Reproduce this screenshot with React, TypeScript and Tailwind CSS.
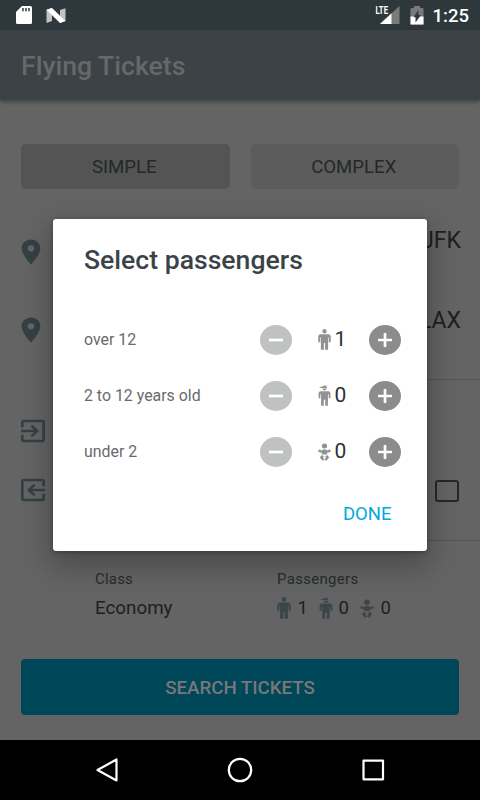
import type { ReactNode } from 'react';
import { MdExitToApp, MdPlace } from 'react-icons/md';

type PassengerKind = 'adult' | 'child' | 'infant';

interface PassengerRow {
  kind: PassengerKind;
  label: string;
  count: number;
}

const passengers: PassengerRow[] = [
  { kind: 'adult', label: 'over 12', count: 1 },
  { kind: 'child', label: '2 to 12 years old', count: 0 },
  { kind: 'infant', label: 'under 2', count: 0 },
];

function PassengerIcon({ kind, className }: { kind: PassengerKind; className?: string }) {
  if (kind === 'infant') {
    return (
      <svg viewBox="0 0 14 21" preserveAspectRatio="none" className={className} fill="currentColor">
        <ellipse cx="7" cy="4.9" rx="2.8" ry="2.5" />
        <path d="M.2 9.7 1.2 8.6 4.4 9.6 5.3 8.4H8.7L9.6 9.6 12.8 8.6 13.8 9.7 13.3 11 9.8 11.8V13.4H4.2V11.8L.7 11Z" />
        <path d="M3.6 14.3 6.3 15 5.4 16.7 6.6 18V19.2L4.9 19.5 2 16.8ZM10.4 14.3 7.7 15 8.6 16.7 7.4 18V19.2L9.1 19.5 12 16.8Z" />
      </svg>
    );
  }

  return (
    <svg viewBox="0 0 14 21" preserveAspectRatio="none" className={className} fill="currentColor">
      {kind === 'adult' ? (
        <circle cx="7" cy="2.3" r="2.2" />
      ) : (
        <path d="M2 2.9V2.1L5 1.5 6.4.6H8Q9.5 1 9.6 2.9ZM4.6 3.5H9.5Q9.2 5.3 7.1 5.4 5 5.3 4.6 3.5Z" />
      )}
      {kind === 'adult' ? (
        <path d="M2.5 5.2H11.5Q13.7 5.4 13.7 7.6V13.2H11.6V8.4H10.9V20.8H7.6V14H6.4V20.8H3.1V8.4H2.4V13.2H.3V7.6Q.3 5.4 2.5 5.2Z" />
      ) : (
        <path d="M3 6.2H11Q13.4 6.3 13.4 8.5V13.2H11.5V9.3H10.7V20.8H7.8V14.7H6.2V20.8H3.3V9.3H2.5V13.2H.6V8.5Q.6 6.3 3 6.2Z" />
      )}
    </svg>
  );
}

function RoundButton({ label, className, children }: { label: string; className: string; children: ReactNode }) {
  return (
    <button aria-label={label} className={`flex h-[30px] w-8 items-center justify-center rounded-[50%] ${className}`}>
      <svg viewBox="0 0 14 14" className="h-3.5 w-3.5" stroke="white" strokeWidth="2.7">
        {children}
      </svg>
    </button>
  );
}

function StatusBar() {
  return (
    <div className="flex h-[30px] items-center justify-between bg-[#2e383c] pr-[11px] pl-4">
      <div className="flex items-center gap-3.5">
        <svg viewBox="0 0 16 18" className="h-[18px] w-4">
          <path d="M6 0H14.5Q16 0 16 1.5V16.5Q16 18 14.5 18H1.5Q0 18 0 16.5V6Z" fill="white" />
          <path d="M6.2 2H7.7V5.2H6.2ZM9.2 2H10.7V5.2H9.2ZM12.2 2H13.7V5.2H12.2Z" fill="#2e383c" />
        </svg>
        <svg viewBox="0 0 20 15" className="h-[15px] w-5">
          <path d="M.5 1.8 6 0V13L.5 15ZM14 2 19.5.2V13L14 15Z" fill="#bfc3c4" />
          <path d="M.5 1.8 6 0 19.5 13 14 15Z" fill="white" />
        </svg>
      </div>
      <div className="flex items-center">
        <svg viewBox="0 0 25 20" className="mr-2.5 h-5 w-[25px]">
          <path d="M24.5 1V19H5Z" fill="#7a7a7a" />
          <path d="M16.5 8.2V19H5Z" fill="white" />
          <text x="0.5" y="9" fontSize="10.5" fontWeight="700" textLength="12.5" lengthAdjust="spacingAndGlyphs" fill="white" stroke="#2e383c" strokeWidth="1" paintOrder="stroke">
            LTE
          </text>
        </svg>
        <svg viewBox="0 0 14 19" className="mr-[9px] h-[19px] w-3.5">
          <path d="M4 0H10V2H12.5Q13.5 2 13.5 3V18.5H.5V3Q.5 2 1.5 2H4Z" fill="#7a7a7a" />
          <path d="M.5 10.5H13.5V18.5H.5Z" fill="white" />
          <path d="M8.5 4V9H11L5.5 16.5V11.3H3.5Z" fill="#2e383c" />
        </svg>
        <span className="pt-0.5 text-[18.5px] leading-5 font-medium text-white">1:25</span>
      </div>
    </div>
  );
}

function SearchForm() {
  return (
    <main className="flex h-[640px] flex-col px-[21px] pt-11">
      <div className="flex gap-[21px] text-[18.6px] text-[#23282a]">
        <button className="h-[45px] flex-1 rounded-[5px] bg-[#545454] pt-0.5 pr-0.5">SIMPLE</button>
        <button className="h-[45px] flex-1 rounded-[5px] bg-[#5c5c5c] pt-0.5 pr-0.5">COMPLEX</button>
      </div>

      <div className="mt-[49px] -mr-0.5 flex h-20 items-start justify-between text-[23px] leading-[30px]">
        <MdPlace preserveAspectRatio="none" className="-mt-px -ml-1.5 h-[30px] w-8 text-[#344044]" />
        <span className="-mt-3">JFK</span>
      </div>
      <div className="-mr-0.5 flex h-[60px] items-start justify-between text-[23px] leading-[30px]">
        <MdPlace preserveAspectRatio="none" className="-mt-[3px] -ml-1.5 h-[30px] w-8 text-[#344044]" />
        <span className="-mt-3">LAX</span>
      </div>

      <div className="mt-px -mr-[21px] ml-[74px] border-t border-[#555]" />
      <div className="flex h-[60px] items-center pt-[41px]">
        <MdExitToApp preserveAspectRatio="none" className="-ml-1 h-[30px] w-8 shrink-0 text-[#344044]" />
      </div>
      <div className="flex h-[100px] items-start justify-between pt-[35px]">
        <MdExitToApp preserveAspectRatio="none" className="-ml-1 h-[30px] w-8 -scale-x-100 text-[#344044]" />
        <span className="mt-[5px] h-[22px] w-6 rounded-[3px] border-2 border-[#23292b]" />
      </div>
      <div className="-mr-[21px] ml-[74px] border-t border-[#555]" />

      <div className="ml-[74px] grid grid-cols-[182px_1fr] pt-7">
        <div>
          <div className="text-[15px] leading-5 tracking-[0.2px] text-[#252c2f]">Class</div>
          <div className="mt-[7px] text-[18.8px] leading-6">Economy</div>
        </div>
        <div>
          <div className="text-[15px] leading-5 tracking-[0.3px] text-[#252c2f]">Passengers</div>
          <div className="mt-[7px] grid grid-cols-[42px_41px_42px] items-center text-[18.5px] leading-6">
            {passengers.map((row) => (
              <div key={row.kind} className="flex items-center justify-between pr-[11px]">
                <PassengerIcon kind={row.kind} className="-mt-px h-[22px] w-[14px] text-[#3c4548]" />
                {row.count}
              </div>
            ))}
          </div>
        </div>
      </div>

      <button className="mt-[39px] h-14 rounded-sm bg-[#00475a] pt-0.5 text-[18.7px] font-medium text-[#787878]">
        SEARCH TICKETS
      </button>
    </main>
  );
}

function PassengersDialog() {
  return (
    <div
      role="dialog"
      className="absolute top-[219px] left-[53px] h-[332px] w-[374px] rounded-[3px] bg-white pt-[25px] pr-[26.5px] pl-[31px] shadow-[0_12px_28px_4px_rgba(0,0,0,0.25),0_1px_4px_rgba(0,0,0,0.3)]"
    >
      <h2 className="text-[26.6px] leading-8 font-medium text-[#3a4347]">Select passengers</h2>
      <div className="mt-[35.5px]">
        {passengers.map((row) => (
          <div key={row.kind} className="flex h-14 items-center">
            <span className="flex-1 pt-px text-[15.9px] text-[#6a6a6a]">{row.label}</span>
            <RoundButton label="Remove" className="bg-[#c0c2c2]">
              <path d="M0 7H14" />
            </RoundButton>
            <div className="flex w-[77px] items-center gap-1 pt-px pl-[26px] text-[21px] text-[#2b3336]">
              <PassengerIcon kind={row.kind} className="-mt-0.5 h-[21px] w-[13px] text-[#929292]" />
              {row.count}
            </div>
            <RoundButton label="Add" className="bg-[#8b8c8e]">
              <path d="M0 7H14M7 0V14" />
            </RoundButton>
          </div>
        ))}
      </div>
      <div className="mt-[22.5px] flex justify-end pr-[9px]">
        <button className="text-[18.5px] leading-6 text-[#03a9dc]">DONE</button>
      </div>
    </div>
  );
}

export default function App() {
  return (
    <div className="relative h-[800px] w-[480px] overflow-hidden bg-[#646464] font-[Roboto,sans-serif] text-[#1b2022]">
      <StatusBar />
      <header className="flex h-[70px] items-center bg-[#3b4346] pt-px pl-[21px] shadow-[0_2px_4px_rgba(0,0,0,0.35)]">
        <h1 className="text-[26.6px] font-medium text-[#686868]">Flying Tickets</h1>
      </header>
      <SearchForm />
      <nav className="flex h-[60px] items-center justify-between bg-black px-[95px]">
        <svg viewBox="0 0 24 26" className="h-[26px] w-6" fill="none" stroke="white" strokeWidth="2.2" strokeLinejoin="round">
          <path d="M21.5 2.5V23.5L2.5 13Z" />
        </svg>
        <svg viewBox="0 0 26 26" className="h-[26px] w-[26px]" fill="none" stroke="white" strokeWidth="2.2">
          <circle cx="13" cy="13" r="11.2" />
        </svg>
        <svg viewBox="0 0 24 24" className="h-6 w-6" fill="none" stroke="white" strokeWidth="2.2" strokeLinejoin="round">
          <path d="M2.5 2.7H22V21.3H2.5Z" />
        </svg>
      </nav>
      <PassengersDialog />
    </div>
  );
}
